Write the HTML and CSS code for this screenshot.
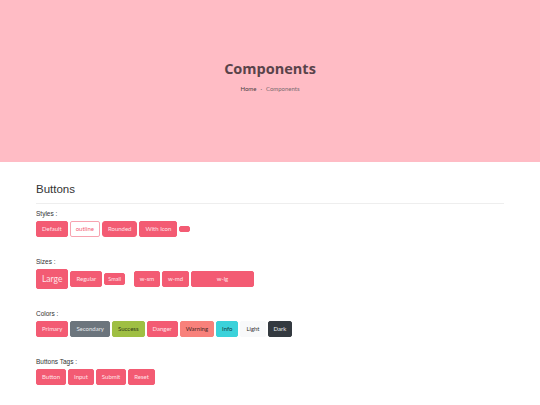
FILE: index.html
```html
<!DOCTYPE html>
<html>
<head>
    <title>Components</title>
    <link rel="stylesheet" href="styles.css">
</head>
<body>
    <header class="hero">
        <h1 class="hero-title">Components</h1>
        <div class="breadcrumb">
            <a href="#" class="crumb">Home</a>
            <span class="crumb-sep">&middot;</span>
            <span class="crumb current">Components</span>
        </div>
    </header>

    <main class="container">
        <h2 class="section-title">Buttons</h2>

        <div class="group">
            <div class="group-label">Styles :</div>
            <div class="btn-row">
                <button class="btn">Default</button>
                <button class="btn btn-outline">outline</button>
                <button class="btn btn-rounded">Rounded</button>
                <button class="btn">With Icon</button>
                <button class="btn btn-icon"></button>
            </div>
        </div>

        <div class="group">
            <div class="group-label">Sizes :</div>
            <div class="btn-row">
                <button class="btn btn-lg">Large</button>
                <button class="btn">Regular</button>
                <button class="btn btn-sm">Small</button>
                <button class="btn w-sm spaced">w-sm</button>
                <button class="btn w-md">w-md</button>
                <button class="btn w-lg">w-lg</button>
            </div>
        </div>

        <div class="group">
            <div class="group-label">Colors :</div>
            <div class="btn-row">
                <button class="btn">Primary</button>
                <button class="btn btn-secondary">Secondary</button>
                <button class="btn btn-success">Success</button>
                <button class="btn btn-danger">Danger</button>
                <button class="btn btn-warning">Warning</button>
                <button class="btn btn-info">Info</button>
                <button class="btn btn-light">Light</button>
                <button class="btn btn-dark">Dark</button>
            </div>
        </div>

        <div class="group">
            <div class="group-label">Buttons Tags :</div>
            <div class="btn-row">
                <button class="btn">Button</button>
                <input class="btn" type="button" value="Input">
                <input class="btn" type="submit" value="Submit">
                <input class="btn" type="reset" value="Reset">
            </div>
        </div>
    </main>
</body>
</html>
```

FILE: styles.css
```css
/* Base page */
body {
    margin: 0;
    background: #fff;
    font-family: "Liberation Sans", Arial, sans-serif;
    color: #333;
}

/* Pink page header */
.hero {
    height: 162px;
    box-sizing: border-box;
    padding-bottom: 10px;
    background: #ffbcc5;
    display: flex;
    flex-direction: column;
    align-items: center;
    justify-content: center;
}

.hero-title {
    margin: 0 0 6px;
    font-family: "Open Sans", sans-serif;
    font-size: 14.5px;
    font-weight: 700;
    color: #59434a;
    line-height: 20px;
}

.breadcrumb {
    display: flex;
    gap: 4px;
    font-family: Lato, sans-serif;
    font-size: 6px;
    line-height: 8px;
}

.crumb {
    color: #4a3d42;
    text-decoration: none;
}

.crumb-sep,
.crumb.current {
    color: #7a6a70;
}

/* Content area */
.container {
    width: 468px;
    margin: 0 auto;
    padding-top: 20px;
}

.section-title {
    margin: 0;
    font-size: 11.5px;
    font-weight: 400;
    line-height: 14px;
    color: #333;
    padding-bottom: 7px;
    border-bottom: 1px solid #eee;
}

.group {
    margin-bottom: 20px;
}

.group:first-of-type {
    margin-top: 5px;
}

.group-label {
    font-size: 6.5px;
    line-height: 10px;
    color: #333;
    margin-bottom: 2px;
}

.btn-row {
    display: flex;
    align-items: center;
    gap: 2px;
}

/* Buttons */
.btn {
    font-family: Lato, sans-serif;
    font-size: 6px;
    line-height: 10px;
    height: 16px;
    padding: 0 5px;
    border: 1px solid #f35b73;
    border-radius: 2px;
    background: #f35b73;
    color: #ffe3e8;
    box-sizing: border-box;
    white-space: nowrap;
    cursor: pointer;
    margin: 0;
}

.btn-outline {
    background: #fff;
    color: #f35b73;
    border-color: #f7a3b0;
}

.btn-rounded {
    border-radius: 3px;
}

.btn-icon {
    width: 11px;
    height: 6px;
    padding: 0;
    border-radius: 2px;
}

.btn-lg {
    height: 20px;
    font-size: 8.5px;
    padding: 0 5px;
}

.btn-sm {
    height: 12px;
    font-size: 5.5px;
    padding: 0 3px;
}

.spaced {
    margin-left: 7px;
}

.w-sm,
.w-md,
.w-lg {
    padding: 0;
    text-align: center;
}

.w-sm {
    width: 26px;
}

.w-md {
    width: 27px;
}

.w-lg {
    width: 63px;
}

/* Colour variants */
.btn-secondary {
    background: #6c757d;
    border-color: #6c757d;
    color: #e4e7ea;
}

.btn-success {
    background: #9fbf43;
    border-color: #9fbf43;
    color: #2f3a16;
}

.btn-danger {
    background: #f35b73;
    border-color: #f35b73;
}

.btn-warning {
    background: #f8817b;
    border-color: #f8817b;
    color: #4a2624;
}

.btn-info {
    background: #3bd2da;
    border-color: #3bd2da;
    color: #123c40;
}

.btn-light {
    background: #f8f9fa;
    border-color: #f8f9fa;
    color: #333;
}

.btn-dark {
    background: #343a40;
    border-color: #343a40;
    color: #eee;
}
```
